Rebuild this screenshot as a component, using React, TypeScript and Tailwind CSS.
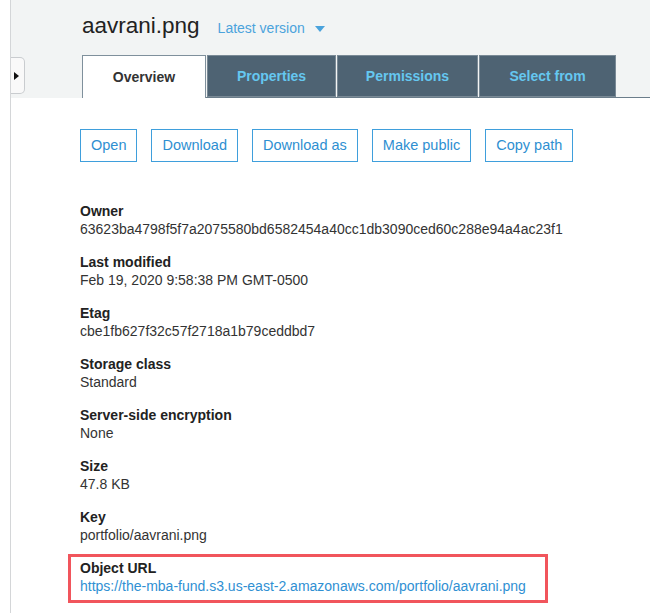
import React from "react";

const fields: { label: string; value: string }[] = [
  { label: "Owner", value: "63623ba4798f5f7a2075580bd6582454a40cc1db3090ced60c288e94a4ac23f1" },
  { label: "Last modified", value: "Feb 19, 2020 9:58:38 PM GMT-0500" },
  { label: "Etag", value: "cbe1fb627f32c57f2718a1b79ceddbd7" },
  { label: "Storage class", value: "Standard" },
  { label: "Server-side encryption", value: "None" },
  { label: "Size", value: "47.8 KB" },
  { label: "Key", value: "portfolio/aavrani.png" },
];

const buttons = ["Open", "Download", "Download as", "Make public", "Copy path"];

export default function App() {
  return (
    <div
      className="relative flex w-[650px] h-[613px] overflow-hidden bg-white"
      style={{ fontFamily: '"Liberation Sans", Arial, Helvetica, sans-serif' }}
    >
      {/* left sidebar strip */}
      <div className="w-[11px] shrink-0 border-r border-[#d4d6d8] bg-white" />

      {/* sidebar toggle */}
      <div className="absolute left-[11px] top-[57px] w-[14px] h-[37px] bg-[#f9f9f9] border border-l-0 border-[#c9cccf] rounded-r-[5px] flex items-center justify-center">
        <div className="w-0 h-0 border-y-[4px] border-y-transparent border-l-[5px] border-l-[#111] -ml-[2px]" />
      </div>

      <div className="flex-1 flex flex-col">
        {/* header */}
        <div className="bg-[#f2f4f4] pl-[71px]">
          <div className="flex items-baseline h-[43px] pt-[12px]">
            <span className="text-[22.5px] leading-[28px] text-[#222]">aavrani.png</span>
            <span className="ml-[18px] text-[14px] text-[#4ba3dc]">Latest version</span>
            <span className="ml-[10px] self-center mt-[3px] w-0 h-0 border-x-[5px] border-x-transparent border-t-[6px] border-t-[#4ba3dc]" />
          </div>
          <div className="mt-[12px] flex gap-[1px] border-b border-[#6b7d8a] h-[43px]">
            <div className="w-[124px] h-[43px] bg-white border border-b-0 border-[#7f909c] flex items-center justify-center text-[14px] font-bold text-[#333]">
              Overview
            </div>
            {[
              { t: "Properties", w: "w-[129px]" },
              { t: "Permissions", w: "w-[141px]" },
              { t: "Select from", w: "w-[137px]" },
            ].map((tab) => (
              <div
                key={tab.t}
                className={`${tab.w} h-[42px] bg-[#4e6373] border border-[#7a8a96] flex items-center justify-center text-[14px] font-bold text-[#65c7f0]`}
              >
                {tab.t}
              </div>
            ))}
          </div>
        </div>

        {/* body */}
        <div className="pl-[69px] pt-[31px]">
          <div className="flex gap-[14px]">
            {buttons.map((b) => (
              <div
                key={b}
                className="h-[33px] px-[10px] border border-[#3f9fdc] flex items-center text-[14.5px] text-[#2e8fd1]"
              >
                {b}
              </div>
            ))}
          </div>

          <div className="mt-[40px] flex flex-col gap-[15px]">
            {fields.map((f) => (
              <div key={f.label} className="flex flex-col text-[14px] leading-[18px]">
                <span className="font-bold text-[#222]">{f.label}</span>
                <span className="text-[#333]">{f.value}</span>
              </div>
            ))}
            <div className="-mt-[5px] -ml-[12px] w-[480px] border-[3px] border-[#f1555c] pl-[9px] pt-[2px] pb-[5px] flex flex-col text-[14px] leading-[18px]">
              <span className="font-bold text-[#222]">Object URL</span>
              <span className="text-[#2f90d3]">https://the-mba-fund.s3.us-east-2.amazonaws.com/portfolio/aavrani.png</span>
            </div>
          </div>
        </div>
      </div>
    </div>
  );
}
